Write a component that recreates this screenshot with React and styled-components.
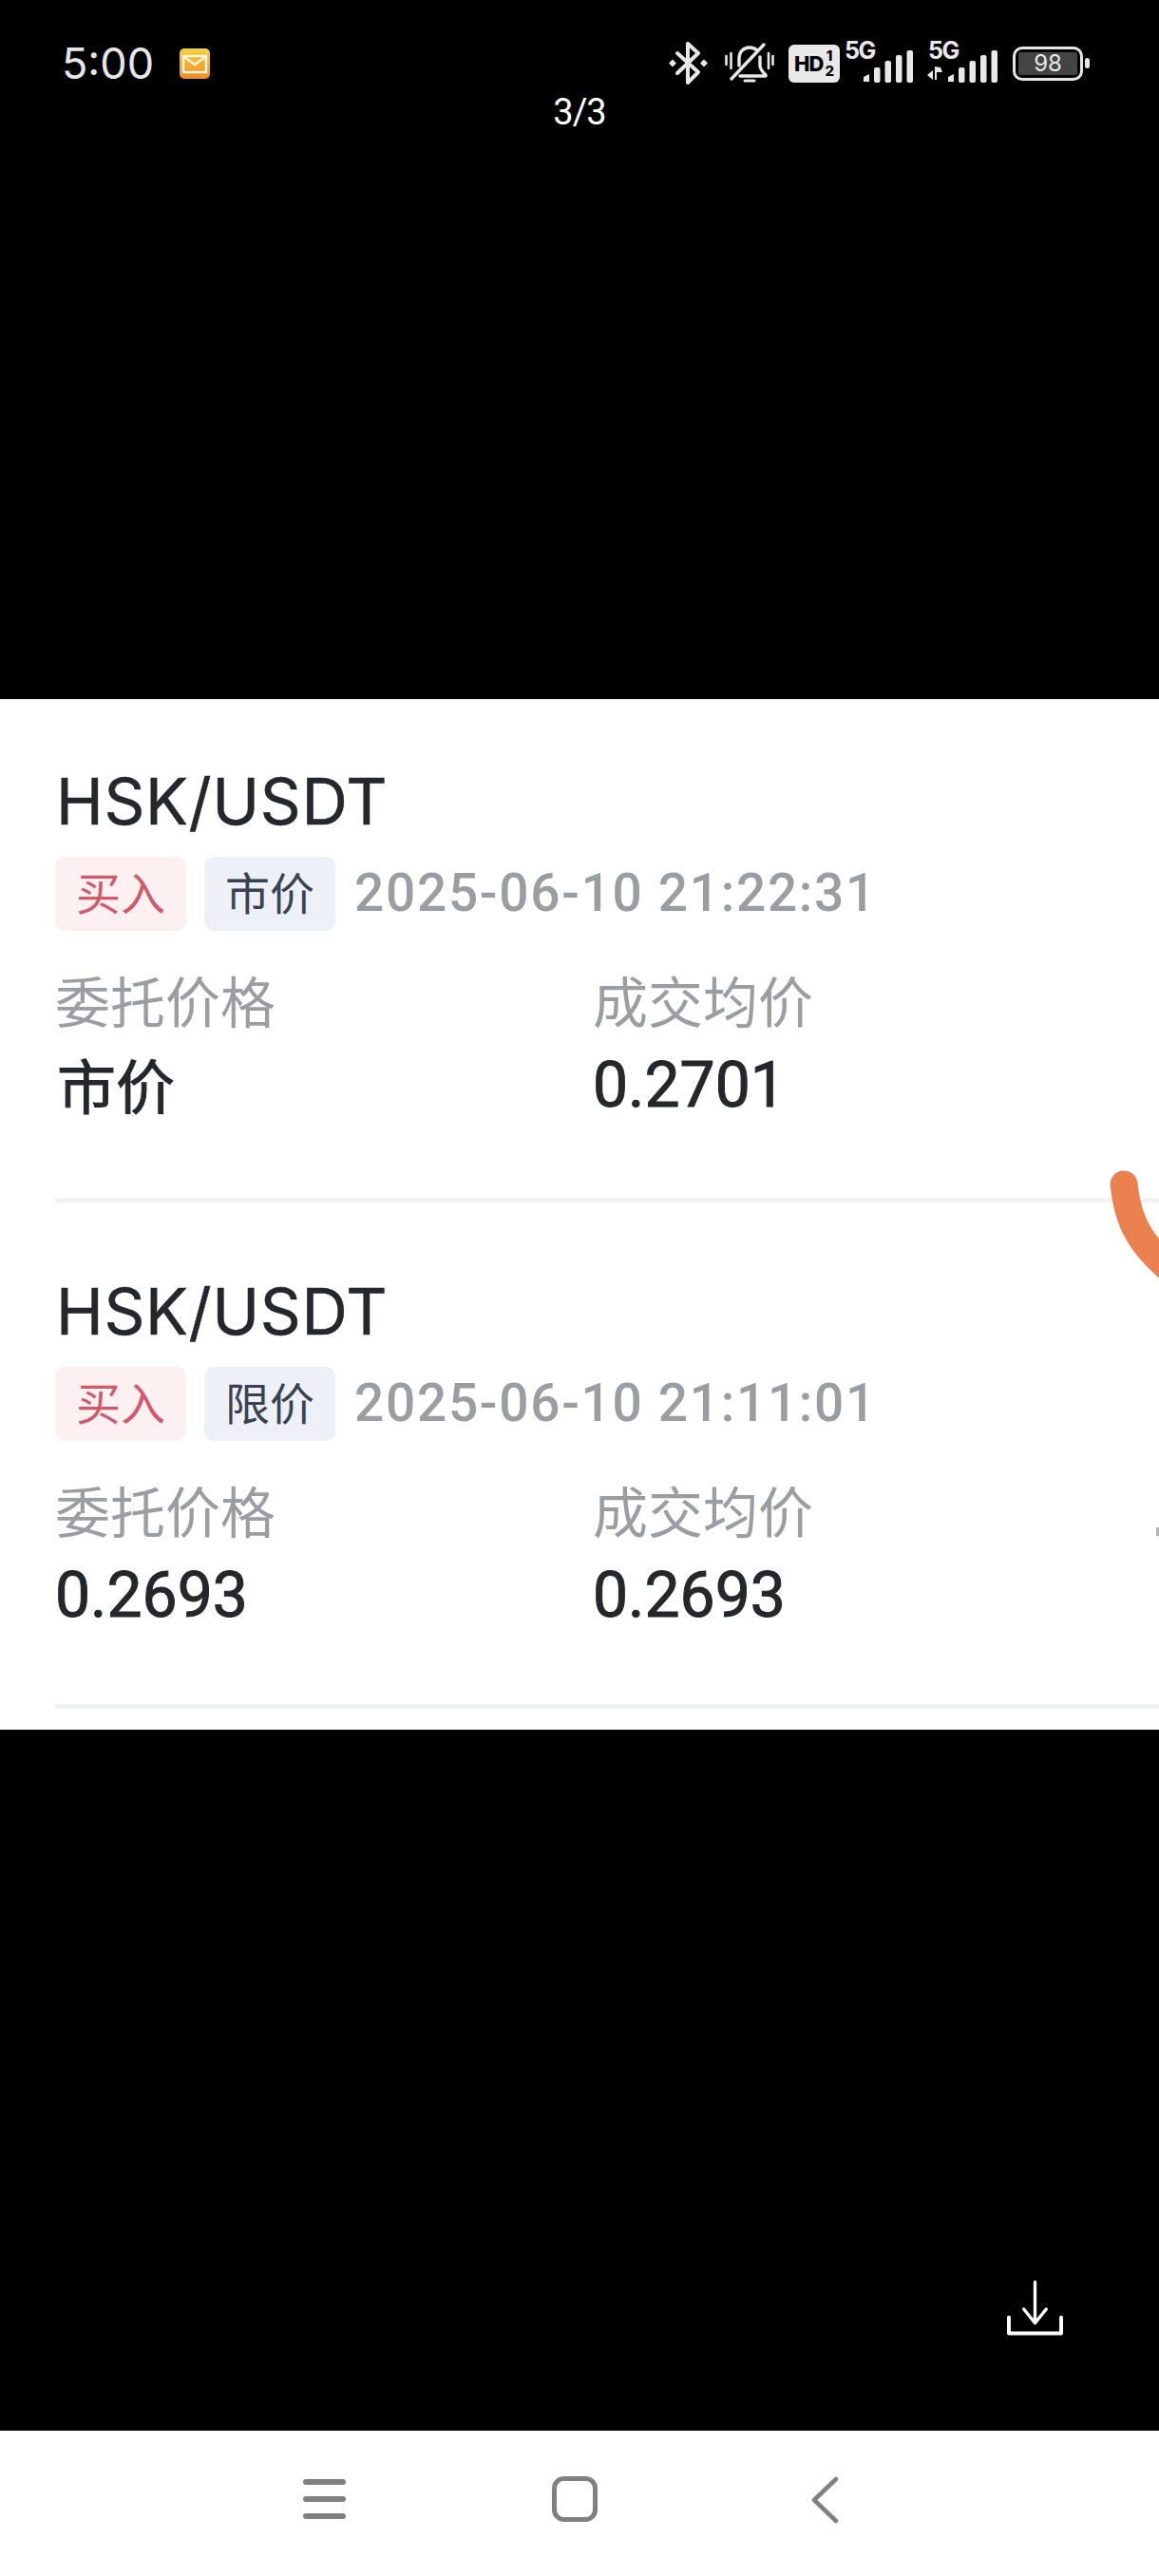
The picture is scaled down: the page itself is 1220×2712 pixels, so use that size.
import React from "react";
import styled, { createGlobalStyle } from "styled-components";

const GlobalStyle = createGlobalStyle`
  html, body {
    margin: 0;
    padding: 0;
    background: #000;
  }
  * {
    box-sizing: border-box;
  }
`;

const cjk = `"Noto Sans CJK SC", sans-serif`;

const Page = styled.div`
  position: relative;
  width: 1220px;
  height: 2712px;
  overflow: hidden;
  font-family: Roboto, ${cjk};
`;

const TopArea = styled.header`
  height: 736px;
  padding-top: 43px;
  background: #000;
`;

const StatusBar = styled.div`
  display: flex;
  align-items: center;
  height: 47px;
  padding: 0 73px 0 65px;
`;

const Time = styled.span`
  font-family: Inter, sans-serif;
  font-size: 45px;
  line-height: 47px;
  color: #e6e6e6;
`;

const MailBadge = styled.svg`
  width: 32px;
  height: 32px;
  margin-left: 27px;
`;

const StatusIcons = styled.div`
  display: flex;
  align-items: center;
  margin-left: auto;
`;

const StatusGlyph = styled.svg`
  display: block;
  width: ${(p) => p.$w}px;
  height: ${(p) => p.$h}px;
  margin-left: ${(p) => p.$gap || 0}px;
`;

const HdBox = styled.div`
  display: flex;
  align-items: center;
  justify-content: center;
  gap: 2px;
  width: 54px;
  height: 40px;
  margin-left: 15px;
  background: #e8e8e8;
  border-radius: 6px;
  color: #000;
  font-family: Inter, sans-serif;
  font-weight: 800;
`;

const HdText = styled.span`
  font-size: 22px;
  letter-spacing: -1px;
`;

const HdStack = styled.span`
  display: flex;
  flex-direction: column;
  align-items: center;
  font-size: 15px;
  line-height: 16px;
`;

const SignalGroup = styled.div`
  position: relative;
  width: ${(p) => p.$w}px;
  height: 47px;
  margin-left: ${(p) => p.$gap}px;
`;

const NetLabel = styled.span`
  position: absolute;
  left: ${(p) => p.$left}px;
  top: -2px;
  font-family: Inter, sans-serif;
  font-weight: 700;
  font-size: 25px;
  line-height: 25px;
  letter-spacing: -1.5px;
  color: #e8e8e8;
`;

const SignalBars = styled.svg`
  position: absolute;
  right: 0;
  bottom: 3px;
  width: ${(p) => p.$w}px;
  height: 34px;
`;

const Battery = styled.div`
  display: flex;
  align-items: center;
  margin-left: 16px;
`;

const BatteryBody = styled.div`
  display: flex;
  align-items: center;
  justify-content: center;
  width: 74px;
  height: 36px;
  padding: 3px;
  border: 3px solid #e6e6e6;
  border-radius: 10px;
`;

const BatteryLevel = styled.span`
  display: block;
  width: 100%;
  height: 100%;
  background: #444;
  border-radius: 2px;
  text-align: center;
  font-family: Inter, sans-serif;
  font-size: 24px;
  line-height: 24px;
  color: #e8e8e8;
`;

const BatteryNub = styled.span`
  width: 5px;
  height: 11px;
  margin-left: 2px;
  border-radius: 3px;
  background: #e6e6e6;
`;

const Counter = styled.div`
  margin-top: 8px;
  text-align: center;
  font-size: 38px;
  line-height: 40px;
  letter-spacing: -1px;
  color: #fff;
`;

const Panel = styled.section`
  height: 1085px;
  padding-left: 58px;
  background: #fff;
`;

const Record = styled.article`
  height: ${(p) => (p.$first ? 530 : 533)}px;
  padding-top: ${(p) => (p.$first ? 68 : 75)}px;
  border-bottom: 5px solid #f1f2f3;
`;

const Pair = styled.h2`
  margin: 0;
  padding-left: 1px;
  font-family: Inter, sans-serif;
  font-size: 67px;
  line-height: 80px;
  font-weight: 400;
  letter-spacing: 0.6px;
  color: #24272b;
  -webkit-text-stroke: 0.5px #24272b;
`;

const MetaRow = styled.div`
  display: flex;
  align-items: center;
  gap: 19px;
  margin-top: 18px;
`;

const Tag = styled.span`
  display: flex;
  align-items: center;
  justify-content: center;
  width: 138px;
  height: 78px;
  border-radius: 10px;
  font-family: ${cjk};
  font-size: 47px;
  padding-bottom: 8px;
  background: ${(p) => (p.$buy ? "#fdf0f0" : "#edf0f7")};
  color: ${(p) => (p.$buy ? "#d2596c" : "#3a4252")};
`;

const DateText = styled.span`
  margin-left: 1px;
  font-size: 55px;
  font-weight: 500;
  letter-spacing: 1.7px;
  padding-bottom: 3px;
  color: #9a9da1;
`;

const Fields = styled.div`
  display: grid;
  grid-template-columns: 566px 1fr;
  margin-top: 33px;
`;

const FieldLabel = styled.div`
  font-family: ${cjk};
  font-size: 58px;
  line-height: 78px;
  color: #9a9da1;
`;

const FieldValue = styled.div`
  margin-top: ${(p) => (p.$cjk ? 10 : 12)}px;
  padding-left: ${(p) => (p.$cjk ? 2 : 0)}px;
  font-size: ${(p) => (p.$cjk ? 62 : 66)}px;
  line-height: 80px;
  color: #24272b;
  font-family: ${(p) => (p.$cjk ? cjk : "Roboto, sans-serif")};
  -webkit-text-stroke: 1px #24272b;
`;

const Scribble = styled.svg`
  position: absolute;
  left: 1140px;
  top: 1220px;
  width: 80px;
  height: 140px;
`;

const EdgeMark = styled.span`
  position: absolute;
  left: 1217px;
  top: 1608px;
  width: 3px;
  height: 9px;
  background: #b5b5b5;
`;

const BottomArea = styled.div`
  display: flex;
  justify-content: flex-end;
  align-items: flex-end;
  height: 738px;
  padding: 0 101px 99px 0;
  background: #000;
`;

const DownloadIcon = styled.svg`
  display: block;
  width: 59px;
  height: 60px;
`;

const NavBar = styled.nav`
  display: flex;
  align-items: flex-start;
  gap: 217px;
  height: 153px;
  padding: 48px 0 0 318px;
  background: #fff;
`;

const NavIcon = styled.svg`
  display: block;
  width: ${(p) => p.$w}px;
  height: 50px;
  margin-left: ${(p) => p.$offset || 0}px;
`;

const SignalSvg = ({ width, offset = 0, arrows }) => (
  <SignalBars $w={width} viewBox={`0 0 ${width} 34`} fill="#e8e8e8">
    {arrows && (
      <path d="M7 21v10l-6-5zM9 17v14h2v-8l6 0-2-5z" />
    )}
    <path d={`M${offset} 33v-5l6-3v8z`} />
    <rect x={offset + 11} y="18" width="6.5" height="16" rx="2" />
    <rect x={offset + 22.5} y="11" width="6.5" height="23" rx="2" />
    <rect x={offset + 34} y="5" width="6.5" height="29" rx="2" />
    <rect x={offset + 45.5} y="0" width="6.5" height="34" rx="2" />
  </SignalBars>
);

const OrderRecord = ({ first, kind, time, price, average, priceCjk }) => (
  <Record $first={first}>
    <Pair>HSK/USDT</Pair>
    <MetaRow>
      <Tag $buy>买入</Tag>
      <Tag>{kind}</Tag>
      <DateText>{time}</DateText>
    </MetaRow>
    <Fields>
      <div>
        <FieldLabel>委托价格</FieldLabel>
        <FieldValue $cjk={priceCjk}>{price}</FieldValue>
      </div>
      <div>
        <FieldLabel>成交均价</FieldLabel>
        <FieldValue>{average}</FieldValue>
      </div>
    </Fields>
  </Record>
);

const App = () => (
  <Page>
    <GlobalStyle />
    <TopArea>
      <StatusBar>
        <Time>5:00</Time>
        <MailBadge viewBox="0 0 32 32">
          <defs>
            <linearGradient id="mailFill" x1="0" y1="0" x2="0" y2="1">
              <stop offset="0" stopColor="#f6d23e" />
              <stop offset="1" stopColor="#ee8a2c" />
            </linearGradient>
          </defs>
          <rect width="32" height="32" rx="5" fill="url(#mailFill)" />
          <rect x="4" y="8" width="24" height="17" fill="none" stroke="#fff8dc" strokeWidth="2.4" />
          <path d="M5 9l11 8 11-8" fill="none" stroke="#fff8dc" strokeWidth="2.4" />
        </MailBadge>
        <StatusIcons>
          <StatusGlyph $w={43} $h={47} viewBox="0 0 43 47" fill="none" stroke="#e8e8e8" strokeWidth="4" strokeLinejoin="round" strokeLinecap="round">
            <path d="M21 3v41l11-11L10 13M10 34l22-21L21 3" />
            <path d="M2 23.5l3-3 3 3-3 3zM35 23.5l3-3 3 3-3 3z" fill="#e8e8e8" strokeWidth="1.5" />
          </StatusGlyph>
          <StatusGlyph $gap={17} $w={52} $h={44} viewBox="0 0 52 44" fill="none" stroke="#e8e8e8" strokeWidth="3.4" strokeLinecap="round" strokeLinejoin="round">
            <path d="M41 2L7 38" />
            <path d="M15 24V17c0-8 5-12 11-12 3 0 6 1 8 3M37 15v9c0 3 2 6 6 10v1H16" />
            <path d="M21 40h10" strokeWidth="3" />
            <path d="M1.5 14v9M6.5 11v16M46 11v16M50.5 14v9" strokeWidth="2.6" />
          </StatusGlyph>
          <HdBox>
            <HdText>HD</HdText>
            <HdStack>
              <span>1</span>
              <span>2</span>
            </HdStack>
          </HdBox>
          <SignalGroup $w={71} $gap={7}>
            <NetLabel $left={-2}>5G</NetLabel>
            <SignalSvg width={53} />
          </SignalGroup>
          <SignalGroup $w={75} $gap={13}>
            <NetLabel $left={2}>5G</NetLabel>
            <SignalSvg width={75} offset={23} arrows />
          </SignalGroup>
          <Battery>
            <BatteryBody>
              <BatteryLevel>98</BatteryLevel>
            </BatteryBody>
            <BatteryNub />
          </Battery>
        </StatusIcons>
      </StatusBar>
      <Counter>3/3</Counter>
    </TopArea>
    <Panel>
      <OrderRecord first kind="市价" time="2025-06-10 21:22:31" price="市价" priceCjk average="0.2701" />
      <OrderRecord kind="限价" time="2025-06-10 21:11:01" price="0.2693" average="0.2693" />
    </Panel>
    <BottomArea>
      <DownloadIcon viewBox="0 0 60 60" fill="none" stroke="#fff" strokeLinecap="round" strokeLinejoin="round">
        <path d="M30 2v44M18 31l12 15 12-15" strokeWidth="3.4" />
        <path d="M2 40v17h56V40" strokeWidth="4" />
      </DownloadIcon>
    </BottomArea>
    <NavBar>
      <NavIcon $w={46} viewBox="0 0 46 50" fill="#808080">
        <rect x="1" y="3" width="45" height="6" rx="3" />
        <rect x="1" y="21" width="45" height="6" rx="3" />
        <rect x="1" y="39" width="45" height="6" rx="3" />
      </NavIcon>
      <NavIcon $w={48} viewBox="0 0 48 50" fill="none" stroke="#808080" strokeWidth="5">
        <rect x="2.5" y="2.5" width="43" height="43" rx="10" />
      </NavIcon>
      <NavIcon $w={30} $offset={7} viewBox="0 0 30 50" fill="none" stroke="#808080" strokeWidth="4.5" strokeLinecap="round" strokeLinejoin="round">
        <path d="M27 3L4 25l23 22" />
      </NavIcon>
    </NavBar>
    <Scribble viewBox="0 0 80 140">
      <path d="M43 27C47 60 55 85 90 115" fill="none" stroke="#ec8150" strokeWidth="29" strokeLinecap="round" />
    </Scribble>
    <EdgeMark />
  </Page>
);

export default App;
